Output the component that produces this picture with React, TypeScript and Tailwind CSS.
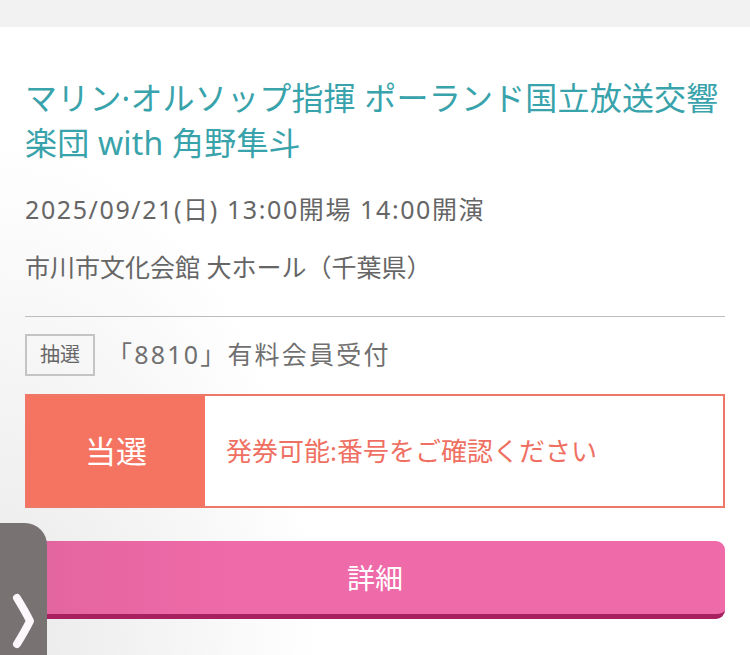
import React from "react";

const FONT = { fontFamily: '"Noto Sans", "Noto Sans CJK JP", sans-serif' };

function SideTab() {
  return (
    <div className="absolute left-0 top-[523px] h-[140px] w-[47px] rounded-tr-[22px] bg-[#787273]">
      <svg className="absolute left-[9px] top-[68px]" width="30" height="60" viewBox="0 0 30 60">
        <path d="M8 7 Q16 20 21 30 Q16 40 8 53" fill="none" stroke="#fdf6fb" strokeWidth="8" strokeLinecap="round" strokeLinejoin="round" />
      </svg>
    </div>
  );
}

export default function App() {
  return (
    <div className="relative h-[655px] w-[750px] overflow-hidden bg-white" style={FONT}>
      <div className="h-[27px] bg-[#f2f2f2]" />
      <div className="h-[628px] bg-[radial-gradient(ellipse_320px_520px_at_0%_100%,#e9e9e9,#ffffff)] px-[25px] pt-[48px]">
        <h1 className="text-[32px] font-normal leading-[45px] tracking-[0.2px] text-[#39a3ab]">
          マリン·オルソップ指揮 ポーランド国立放送交響楽団 with 角野隼斗
        </h1>
        <p className="mt-[26px] text-[25px] leading-[36px] tracking-[1.6px] text-[#666]">
          2025/09/21(日) 13:00開場 14:00開演
        </p>
        <p className="mt-[22px] text-[25px] leading-[36px] text-[#666]">
          市川市文化会館 大ホール（千葉県）
        </p>
        <div className="mt-[31px] h-px bg-[#bdbdbd]" />
        <div className="mt-[17px] flex items-center gap-[12px]">
          <span className="flex h-[42px] w-[70px] items-center justify-center border-2 border-[#c4c4c4] text-[20px] text-[#666]">
            抽選
          </span>
          <span className="text-[25px] tracking-[2.2px] text-[#707070]">「8810」有料会員受付</span>
        </div>
        <div className="mt-[18px] flex h-[114px] border-2 border-[#ef7767] bg-white">
          <div className="flex w-[178px] items-center justify-center bg-[#f57461] text-[31px] text-white">
            当選
          </div>
          <div className="flex flex-1 items-center pl-[21px] text-[26px] text-[#ef7062]">
            発券可能:番号をご確認ください
          </div>
        </div>
        <button className="mt-[33px] flex h-[78px] w-full items-center justify-center rounded-[9px] border-b-[5px] border-[#a8205f] bg-[linear-gradient(to_right,#e2659f,#ef6aa8_30%)] text-[28px] text-white">
          詳細
        </button>
      </div>
      <SideTab />
    </div>
  );
}
